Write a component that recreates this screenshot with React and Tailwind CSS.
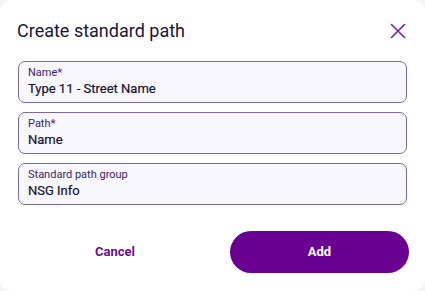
export default function App() {
  const fields = [
    { label: "Name", required: true, value: "Type 11 - Street Name" },
    { label: "Path", required: true, value: "Name" },
    { label: "Standard path group", required: false, value: "NSG Info" },
  ];

  return (
    <div className="w-[425px] h-[291px] bg-[#f4f4f6] font-['Roboto',sans-serif]">
      <div className="w-full h-full bg-white rounded-xl flex flex-col px-[18px]">
        {/* Header */}
        <div className="flex items-center justify-between pt-[14px] h-[47px]">
          <h2 className="text-[18px] leading-none text-[#1c1537] -ml-px">Create standard path</h2>
          <button className="mr-[1px] text-[#7b1fa2]">
            <svg width="16" height="16" viewBox="0 0 16 16" fill="none" stroke="currentColor" strokeWidth="1.6" strokeLinecap="round">
              <path d="M1.5 1.5L14.5 14.5M14.5 1.5L1.5 14.5" />
            </svg>
          </button>
        </div>

        {/* Fields */}
        <div className="flex flex-col gap-[9px] mt-[14px]">
          {fields.map((f) => (
            <div
              key={f.label}
              className="h-[42px] rounded-[7px] border border-[#7a6a9e] bg-[#f7f7fd] px-[9px] pt-[4px] flex flex-col"
            >
              <span className="text-[11px] leading-[14px] text-[#3a1f66]">
                {f.label}
                {f.required && <span className="text-[#7b1fa2] font-bold">*</span>}
              </span>
              <span className="text-[13px] leading-[18px] text-[#16122a] [-webkit-text-stroke:0.2px_#16122a]">{f.value}</span>
            </div>
          ))}
        </div>

        {/* Actions */}
        <div className="flex items-center mt-[26px]">
          <div className="flex-1 flex justify-center pr-[18px]">
            <button className="text-[13px] font-bold text-[#6b0d8f]">Cancel</button>
          </div>
          <button className="w-[179px] h-[42px] rounded-full bg-[#6a0092] text-white text-[13px] font-bold -mr-[2px]">
            Add
          </button>
        </div>
      </div>
    </div>
  );
}
